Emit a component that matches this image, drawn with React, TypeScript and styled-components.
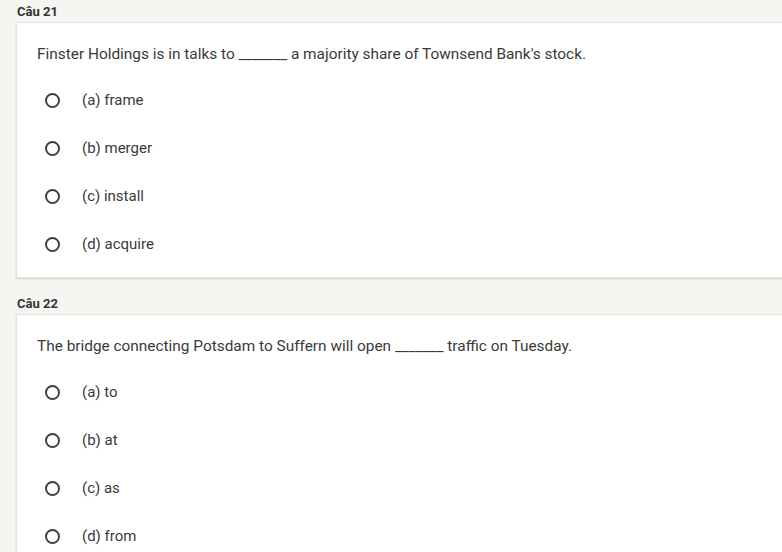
import React from "react";
import styled, { createGlobalStyle } from "styled-components";

const Global = createGlobalStyle`
  html, body { margin: 0; padding: 0; background: #f5f5f1; overflow: hidden; }
  body { font-family: Roboto, "Liberation Sans", sans-serif; }
`;

const Page = styled.div`
  width: 800px;
  padding: 4px 0 0 16px;
  display: flex;
  flex-direction: column;
`;

const Block = styled.section`
  display: flex;
  flex-direction: column;
  margin-bottom: 18px;
`;

const Label = styled.div`
  font-size: 13px;
  font-weight: 700;
  color: #333;
  line-height: 16px;
  padding-left: 1px;
  margin-bottom: 2px;
`;

const Card = styled.div`
  background: #fff;
  border: 1px solid #e2e2de;
  box-shadow: 0 1px 2px rgba(0, 0, 0, 0.12);
  padding: 20px 20px 9px 20px;
  display: flex;
  flex-direction: column;
`;

const Question = styled.div`
  font-size: 15.4px;
  line-height: 22px;
  color: #3a3a3a;
  margin-bottom: 11px;
`;

const Option = styled.label`
  display: flex;
  align-items: center;
  height: 48px;
  padding-left: 8px;
  font-size: 15px;
  color: #3a3a3a;
  cursor: pointer;
`;

const Radio = styled.span`
  box-sizing: border-box;
  width: 15px;
  height: 15px;
  border: 2px solid #404040;
  border-radius: 50%;
  margin-right: 22px;
  flex: none;
`;

const questions = [
  {
    label: "Câu 21",
    text: "Finster Holdings is in talks to _______ a majority share of Townsend Bank's stock.",
    options: ["(a) frame", "(b) merger", "(c) install", "(d) acquire"],
  },
  {
    label: "Câu 22",
    text: "The bridge connecting Potsdam to Suffern will open _______ traffic on Tuesday.",
    options: ["(a) to", "(b) at", "(c) as", "(d) from"],
  },
];

export default function App() {
  return (
    <>
      <Global />
      <Page>
        {questions.map((q) => (
          <Block key={q.label}>
            <Label>{q.label}</Label>
            <Card>
              <Question>{q.text}</Question>
              {q.options.map((o) => (
                <Option key={o}>
                  <Radio />
                  {o}
                </Option>
              ))}
            </Card>
          </Block>
        ))}
      </Page>
    </>
  );
}
